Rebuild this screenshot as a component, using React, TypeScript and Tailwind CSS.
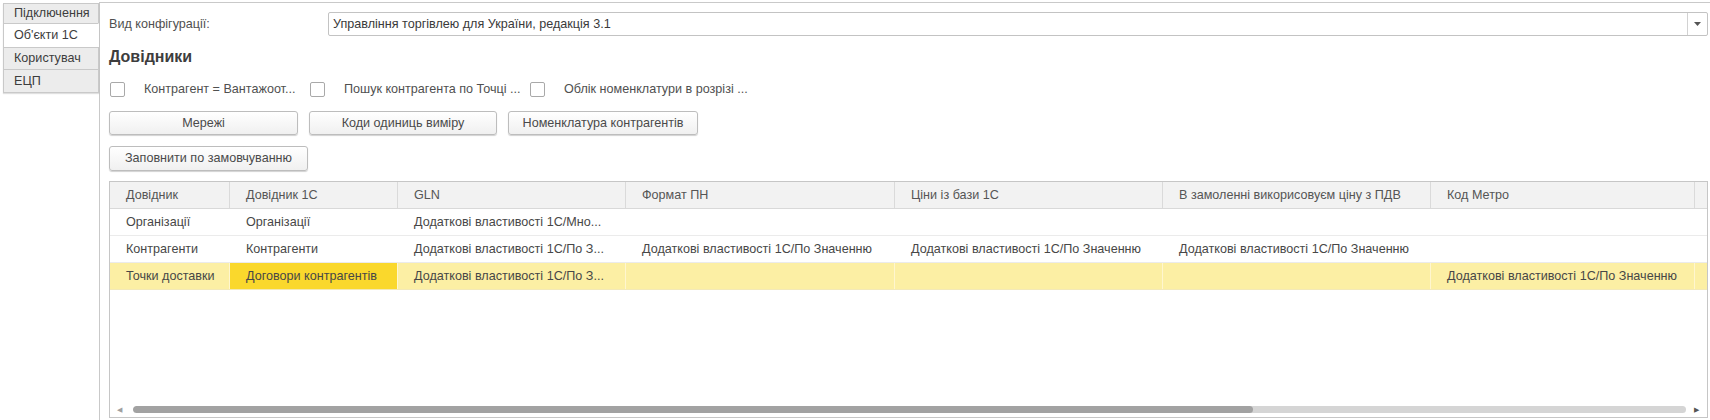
import { ReactNode } from "react";

const TABS = ["Підключення", "Об'єкти 1С", "Користувач", "ЕЦП"];

const COLUMNS = [
  "Довідник",
  "Довідник 1С",
  "GLN",
  "Формат ПН",
  "Ціни із бази 1С",
  "В замоленні викорисовуєм ціну з ПДВ",
  "Код Метро",
  "",
];

const FULL = "Додаткові властивості 1С/По Значенню";

const ROWS: { cells: string[]; current?: boolean }[] = [
  { cells: ["Організації", "Організації", "Додаткові властивості 1С/Мно...", "", "", "", "", ""] },
  { cells: ["Контрагенти", "Контрагенти", "Додаткові властивості 1С/По З...", FULL, FULL, FULL, "", ""] },
  {
    cells: ["Точки доставки", "Договори контрагентів", "Додаткові властивості 1С/По З...", "", "", "", FULL, ""],
    current: true,
  },
];

const GRID = "grid grid-cols-[120px_168px_228px_269px_268px_268px_264px_12px]";

function Tab({ label, active, h }: { label: string; active?: boolean; h: string }) {
  return (
    <div
      className={`${h} flex items-center pl-[10px] border border-[#c9c9c9] -mt-px first:mt-0 text-[12.6px] text-[#3d3d3d] ${
        active ? "bg-white border-r-white" : "bg-[#ececec]"
      }`}
    >
      {label}
    </div>
  );
}

function Checkbox({ label, w }: { label: string; w: string }) {
  return (
    <div className={`${w} flex items-center`}>
      <span className="h-[15px] w-[15px] shrink-0 rounded-[2px] border border-[#a9a9a9] bg-white" />
      <span className="ml-[19px] whitespace-nowrap text-[12.6px] text-[#505050]">{label}</span>
    </div>
  );
}

function Button({ children, w, h }: { children: ReactNode; w: string; h: string }) {
  return (
    <div
      className={`${w} ${h} flex items-center justify-center rounded-[3px] border border-[#bdbdbd] bg-gradient-to-b from-white to-[#f0f0f0] text-[12.6px] text-[#4a4a4a] shadow-[0_1px_1px_rgba(0,0,0,0.18)]`}
    >
      {children}
    </div>
  );
}

function Table() {
  return (
    <div className="mt-[10px] mr-[2px] flex h-[237px] flex-col border border-[#c6c6c6] bg-white">
      {/* Header */}
      <div className={`${GRID} h-[27px] border-b border-[#d9d9d9] bg-[#f2f2f2]`}>
        {COLUMNS.map((c, i) => (
          <div
            key={i}
            className="flex items-center overflow-hidden whitespace-nowrap border-r border-[#dadada] pl-[16px] text-[12.6px] text-[#555] last:border-r-0"
          >
            {c}
          </div>
        ))}
      </div>

      {/* Rows */}
      {ROWS.map((r, ri) => (
        <div
          key={ri}
          className={`${GRID} h-[27px] border-b ${r.current ? "border-[#f3e9b8] bg-[#fcefa4]" : "border-[#ebebeb]"}`}
        >
          {r.cells.map((c, ci) => (
            <div
              key={ci}
              className={`flex items-center overflow-hidden whitespace-nowrap pl-[16px] text-[12.6px] text-[#474747] ${
                r.current ? "border-r border-[#fff6cf] last:border-r-0" : ""
              } ${r.current && ci === 1 ? "bg-[#fad82c] text-[#383838]" : ""}`}
            >
              {c}
            </div>
          ))}
        </div>
      ))}

      <div className="flex-1" />

      {/* Horizontal scrollbar */}
      <div className="flex h-[15px] items-center pb-[1px]">
        <span className="ml-[7px] w-[12px] text-[7px] leading-none text-[#a0a0a0]">◀</span>
        <div className="ml-[4px] flex h-[7px] w-[1553px] overflow-hidden rounded-full bg-[#d5d5d5]">
          <div className="h-full w-[1120px] rounded-full bg-[#a2a2a2]" />
        </div>
        <span className="ml-[8px] text-[7px] leading-none text-[#555]">▶</span>
      </div>
    </div>
  );
}

export default function App() {
  return (
    <div className="flex h-[420px] w-[1710px] overflow-hidden bg-white font-['Liberation_Sans',Arial,sans-serif]">
      {/* Left tabs */}
      <div className="w-[99px] shrink-0 pl-[3px] pt-[3px]">
        <div className="relative z-10 flex flex-col shadow-[0_1px_1px_rgba(0,0,0,0.12)]">
          <Tab label={TABS[0]} h="h-[21px]" />
          <Tab label={TABS[1]} h="h-[25px]" active />
          <Tab label={TABS[2]} h="h-[23px]" />
          <Tab label={TABS[3]} h="h-[24px]" />
        </div>
      </div>

      {/* Page */}
      <div className="mt-[2px] flex flex-1 flex-col border-l border-t border-[#c9c9c9] pl-[9px]">
        <div className="mt-[9px] flex h-[24px] items-center">
          <span className="w-[219px] text-[12.6px] text-[#505050]">Вид конфігурації:</span>
          <div className="mr-[2px] flex h-full flex-1 items-center rounded-[2px] border border-[#c3c3c3] bg-white">
            <span className="flex-1 pl-[4px] text-[12.6px] text-[#3a3a3a]">
              Управління торгівлею для України, редакція 3.1
            </span>
            <div className="flex h-full w-[20px] items-center justify-center border-l border-[#d2d2d2]">
              <svg width="7" height="4" viewBox="0 0 7 4">
                <path d="M0 0h7L3.5 4z" fill="#555" />
              </svg>
            </div>
          </div>
        </div>

        <div className="mt-[11px] flex h-[20px] items-center text-[16px] font-bold text-[#3d3d3d]">Довідники</div>

        <div className="mt-[14px] flex h-[16px] items-center pl-[1px]">
          <Checkbox label="Контрагент = Вантажоот..." w="w-[200px]" />
          <Checkbox label="Пошук контрагента по Точці ..." w="w-[220px]" />
          <Checkbox label="Облік номенклатури в розрізі ..." w="w-[220px]" />
        </div>

        <div className="mt-[14px] flex gap-[11px]">
          <Button w="w-[189px]" h="h-[24px]">Мережі</Button>
          <Button w="w-[188px]" h="h-[24px]">Коди одиниць виміру</Button>
          <Button w="w-[190px]" h="h-[24px]">Номенклатура контрагентів</Button>
        </div>

        <div className="mt-[11px] flex">
          <Button w="w-[199px]" h="h-[25px]">Заповнити по замовчуванню</Button>
        </div>

        <Table />
      </div>
    </div>
  );
}
